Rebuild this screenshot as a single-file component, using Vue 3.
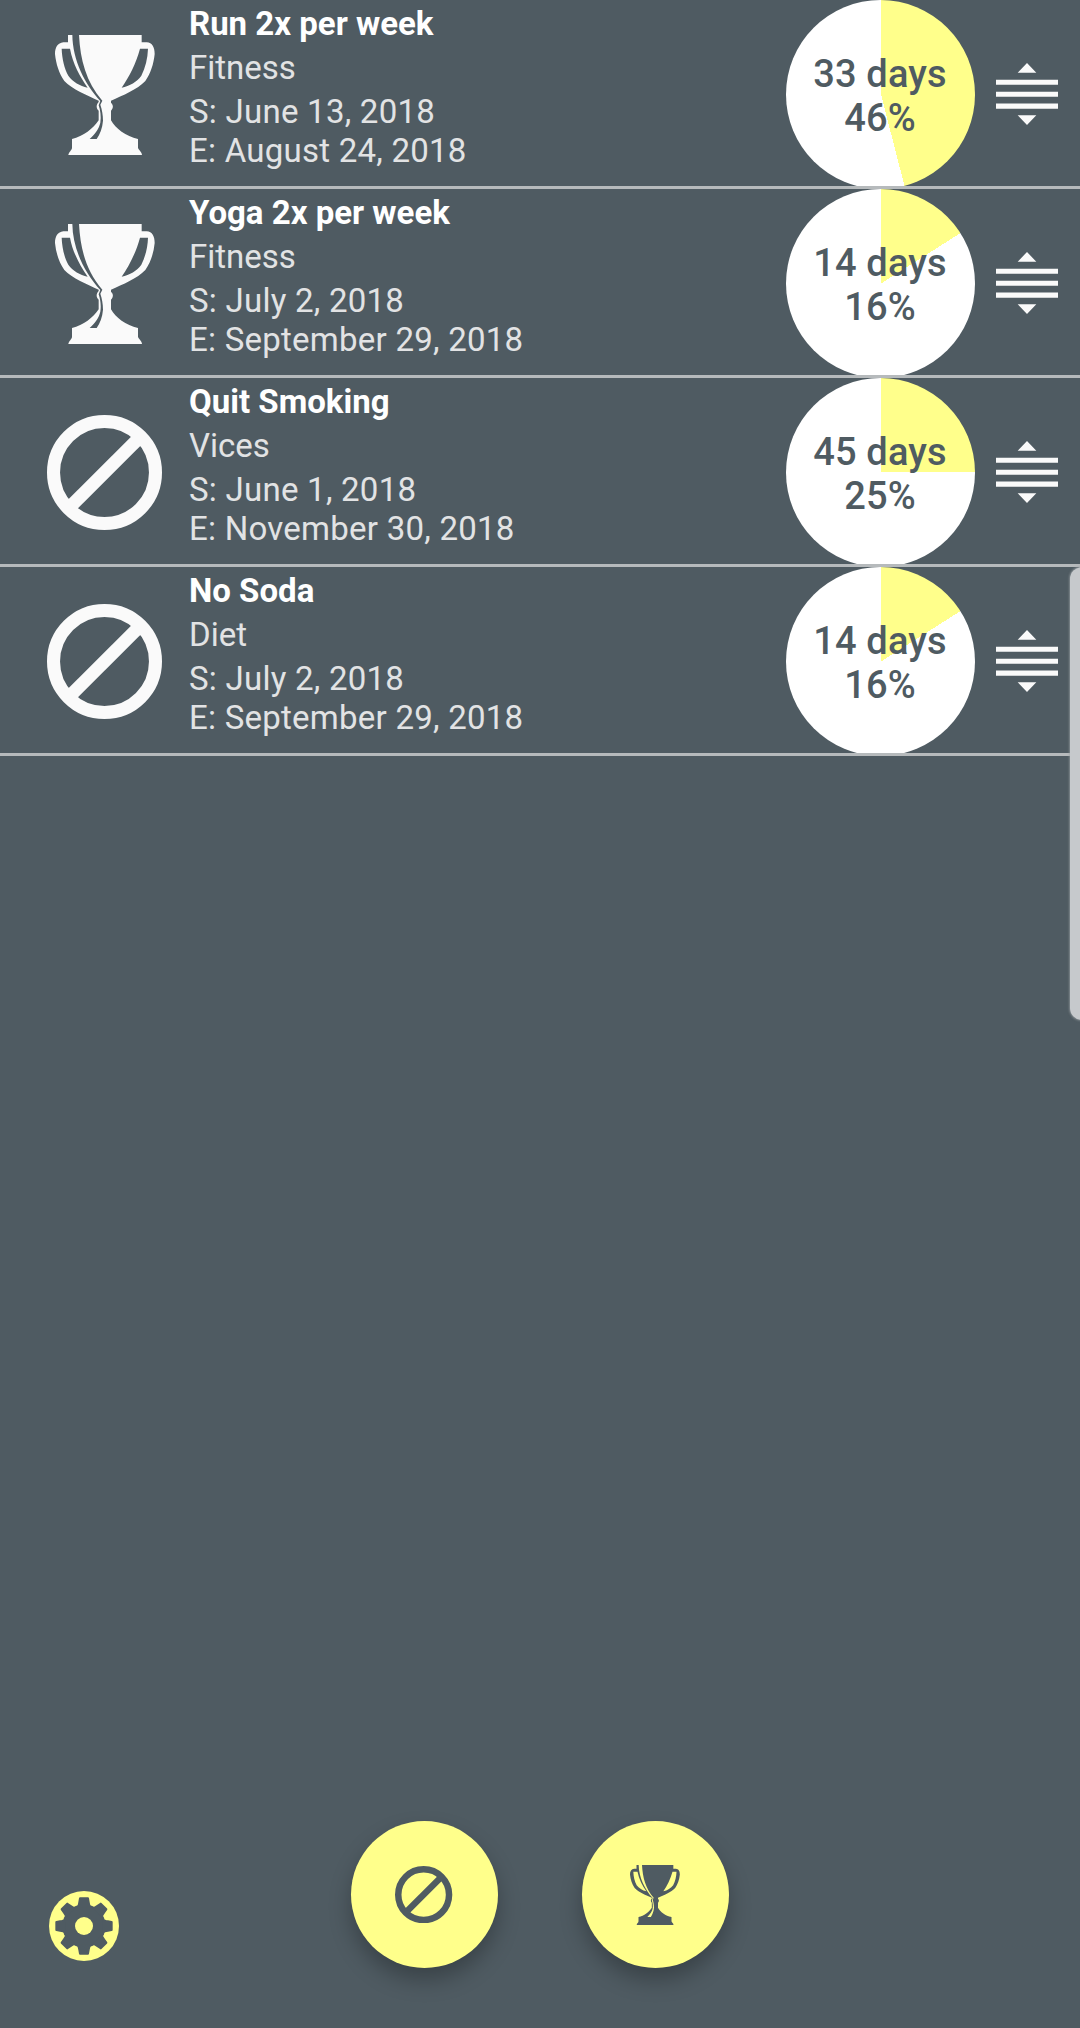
<script setup>
import { h } from 'vue'

const goals = [
  { title: 'Run 2x per week', category: 'Fitness', start: 'June 13, 2018', end: 'August 24, 2018', days: 33, percent: 46, icon: 'trophy' },
  { title: 'Yoga 2x per week', category: 'Fitness', start: 'July 2, 2018', end: 'September 29, 2018', days: 14, percent: 16, icon: 'trophy' },
  { title: 'Quit Smoking', category: 'Vices', start: 'June 1, 2018', end: 'November 30, 2018', days: 45, percent: 25, icon: 'ban' },
  { title: 'No Soda', category: 'Diet', start: 'July 2, 2018', end: 'September 29, 2018', days: 14, percent: 16, icon: 'ban' },
]

const pie = (p) => ({ background: `conic-gradient(at 95px 94.5px, #ffff8b 0 ${p}%, #fff ${p}% 100%)` })

const trophyPath = [
  // silhouette
  'M114 105H335V127H350C367 128 374 142 374 162C371 192 362 220 346 243C322 269 278 286 243 302V308C251 315 250 325 243 332V361C256 386 288 409 324 417V443C326 451 336 455 336 465H115C116 455 126 451 126 443V417C160 409 190 386 206 361V332C198 325 198 314 206 306V302C172 286 126 268 103 243C87 220 78 192 75 162C75 142 83 129 100 127H114Z',
  // handles
  'M95 146H120C128 190 150 230 173 263C150 258 128 245 115 227C103 206 96 175 95 146Z',
  'M330 146H354C353 176 346 203 334 227C321 245 299 258 275 263C298 230 318 190 330 146Z',
  // ribbon of light
  'M127 105H147C151 180 168 245 217 302L211 314C216 328 219 345 219 362C217 385 210 402 200 417H179C197 400 207 385 211 368C214 350 211 330 206 316L211 303C164 252 128 180 127 105Z',
].join('')

const Icon = (props) =>
  props.name === 'trophy'
    ? h('svg', { viewBox: '75 105 300 360', fill: 'currentColor' }, [h('path', { 'fill-rule': 'evenodd', d: trophyPath })])
    : h('svg', { viewBox: '0 0 344 344', fill: 'none', stroke: 'currentColor', 'stroke-width': 39 }, [
        h('circle', { cx: 172, cy: 172, r: 152.5 }),
        h('path', { d: 'M275 69L69 275' }),
      ])
Icon.props = ['name']

const teeth = [0, 45, 90, 135, 180, 225, 270, 315]
</script>

<template>
  <main class="screen">
    <ul class="goals">
      <li v-for="g in goals" :key="g.title" class="goal">
        <div class="kind"><Icon :name="g.icon" :class="g.icon" /></div>
        <div class="info">
          <h2>{{ g.title }}</h2>
          <p class="category">{{ g.category }}</p>
          <p class="date">S: {{ g.start }}</p>
          <p class="date">E: {{ g.end }}</p>
        </div>
        <div class="pie" :style="pie(g.percent)">
          <span>{{ g.days }} days</span>
          <span>{{ g.percent }}%</span>
        </div>
        <svg class="handle" viewBox="0 0 186 186" fill="#fafafa">
          <path d="M93 0L121 29H65ZM0 50H186V65.500H0ZM0 86H186V101.500H0ZM0 121.500H186V137H0ZM65 157H121L93 186Z" />
        </svg>
      </li>
    </ul>

    <footer class="actions">
      <button class="settings" aria-label="Settings">
        <svg viewBox="-105 -105 210 210">
          <circle r="105" fill="#ffff8b" />
          <g fill="#4f5b62">
            <circle r="65" />
            <path v-for="a in teeth" :key="a" :transform="`rotate(${a})`" d="M-22 -56C-19 -62 -18 -66 -17 -72L-15 -83Q-14.500 -86 -12 -86H12Q14.500 -86 15 -83L17 -72C18 -66 19 -62 22 -56Z" />
          </g>
          <circle r="27" fill="#ffff8b" />
        </svg>
      </button>
      <button class="fab" aria-label="Add vice"><Icon name="ban" class="ban" /></button>
      <button class="fab" aria-label="Add goal"><Icon name="trophy" class="trophy" /></button>
    </footer>

    <div class="edge-panel"></div>
  </main>
</template>

<style>
body {
  background: #4f5b62;
}
</style>

<style scoped>
.screen {
  position: relative;
  display: flex;
  flex-direction: column;
  justify-content: space-between;
  width: 1080px;
  height: 2028px;
  overflow: hidden;
  background: #4f5b62;
  font-family: Roboto, "Liberation Sans", sans-serif;
}
.goals {
  margin: 0;
  padding: 0;
  list-style: none;
}
.goal {
  display: flex;
  box-sizing: border-box;
  height: 189px;
  border-bottom: 3px solid #b6babc;
  overflow: hidden;
}
.kind {
  display: flex;
  align-items: center;
  justify-content: center;
  width: 168px;
  height: 189px;
  margin-left: 21px;
  flex: none;
  color: #fafafa;
}
.kind .trophy {
  width: 100px;
  height: 120px;
}
.kind .ban {
  width: 115px;
  height: 115px;
  margin-right: 1px;
}
.info {
  flex: 1;
  padding-top: 4px;
  color: #e2e3e4;
  white-space: nowrap;
}
.info h2,
.info p {
  margin: 0;
  font-size: 33px;
  line-height: 39px;
  font-weight: 400;
}
.info h2 {
  font-weight: 700;
  color: #fff;
}
.info .category {
  margin: 5px 0;
}
.info .date {
  letter-spacing: 0.25px;
}
.pie {
  display: flex;
  flex-direction: column;
  align-items: center;
  justify-content: center;
  flex: none;
  box-sizing: border-box;
  width: 189px;
  height: 189px;
  padding: 3px 1px 0 0;
  border-radius: 50%;
  color: #4f5b62;
  font-size: 38px;
  line-height: 44px;
  font-weight: 500;
  letter-spacing: 0.15px;
}
.handle {
  flex: none;
  width: 62px;
  height: 62px;
  margin: 63px 22px 0 21px;
}
.actions {
  display: flex;
  align-items: flex-end;
  padding: 0 0 60px 49px;
}
button {
  display: flex;
  align-items: center;
  justify-content: center;
  padding: 0;
  border: 0;
  border-radius: 50%;
  background: none;
}
.settings {
  width: 70px;
  height: 70px;
  margin: 0 232px 7px 0;
}
.settings svg {
  width: 70px;
  height: 70px;
}
.fab {
  box-sizing: border-box;
  width: 147px;
  height: 147px;
  padding-right: 1px;
  background: #ffff8b;
  color: #4f5b62;
  box-shadow: 0 12px 22px rgba(0, 0, 0, 0.27);
}
.fab + .fab {
  margin-left: 84px;
}
.fab .ban {
  width: 57.300px;
  height: 57.300px;
}
.fab .trophy {
  width: 50px;
  height: 60px;
}
.edge-panel {
  position: absolute;
  top: 567px;
  right: -14px;
  width: 24px;
  height: 453px;
  border-radius: 12px;
  background: #c6c9cc;
  box-shadow: 0 0 2px 1px rgba(160, 165, 168, 0.6);
}
</style>
